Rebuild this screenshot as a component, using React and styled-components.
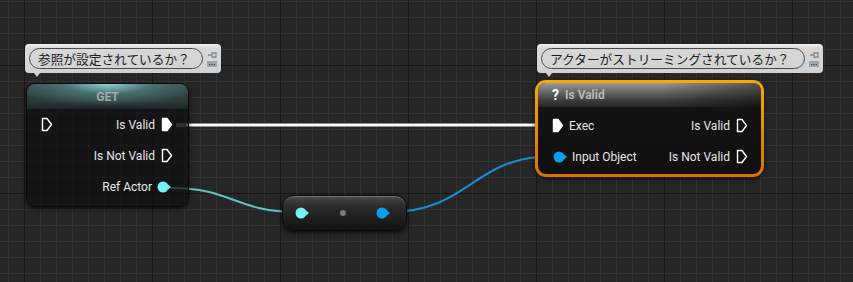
import React from 'react';
import styled, { createGlobalStyle } from 'styled-components';

const GlobalStyles = createGlobalStyle`
  html, body {
    margin: 0;
    padding: 0;
    background: #262626;
    font-family: Roboto, "Noto Sans", sans-serif;
  }
`;

// grid: minor every 16px, major every 128px
const Canvas = styled.div`
  position: relative;
  width: 853px;
  height: 282px;
  overflow: hidden;
  background-color: #262626;
  background-image:
    linear-gradient(to right, #171717 1px, transparent 1px),
    linear-gradient(to bottom, #171717 1px, transparent 1px),
    linear-gradient(to right, #333333 1px, transparent 1px),
    linear-gradient(to bottom, #333333 1px, transparent 1px);
  background-size: 128px 128px, 128px 128px, 16px 16px, 16px 16px;
  background-position: 24px 0, 0 65px, 8px 0, 0 1px;
`;

const Wires = styled.svg`
  position: absolute;
  left: 0;
  top: 0;
`;

const Placed = styled.div`
  position: absolute;
  left: ${p => p.x}px;
  top: ${p => p.y}px;
`;

const Bubble = styled.div`
  position: relative;
  display: flex;
  align-items: center;
  gap: 3px;
  height: 29px;
  padding: 0 3px 0 4px;
  box-sizing: border-box;
  width: ${p => p.w}px;
  border-radius: 4px;
  background: linear-gradient(to bottom, #f2f2f2 0%, #d8d8d8 15%, #d2d2d2 100%);
  &::after {
    content: '';
    position: absolute;
    left: 9px;
    bottom: -4px;
    border-left: 3px solid transparent;
    border-right: 3px solid transparent;
    border-top: 4px solid #d2d2d2;
  }
`;

const Pill = styled.div`
  flex: 1;
  height: 21px;
  box-sizing: border-box;
  border: 1px solid #4a4a4a;
  border-radius: 11px;
  display: flex;
  align-items: center;
  padding-left: 8px;
  font-family: "Noto Sans CJK JP", "Noto Sans", sans-serif;
  font-size: 12.7px;
  color: #1c1c1c;
  white-space: nowrap;
  letter-spacing: 0;
`;

const BubbleIcons = styled.div`
  display: flex;
  flex-direction: column;
  align-items: center;
  gap: 2px;
  width: 12px;
`;

const Node = styled.div`
  width: ${p => p.w}px;
  box-sizing: border-box;
  border-radius: 9px;
  border: 1px solid #0b0b0b;
  background: rgba(14, 14, 14, 0.72);
  box-shadow: 0 2px 4px rgba(0, 0, 0, 0.7);
  overflow: hidden;
  padding-bottom: 4px;
`;

const Selected = styled.div`
  padding: 3px;
  border-radius: 11px;
  background: linear-gradient(to bottom, #f7aa00, #dc7000);
  box-shadow: 0 2px 4px rgba(0, 0, 0, 0.6);
`;

const FuncNode = styled.div`
  width: 223px;
  border-radius: 8px;
  background: linear-gradient(to bottom, #141414, #101010);
  overflow: hidden;
  padding-bottom: 2px;
`;

const GetHeader = styled.div`
  height: 25px;
  display: flex;
  align-items: center;
  justify-content: center;
  font-weight: bold;
  font-size: 12px;
  color: #a9a9a9;
  background:
    radial-gradient(ellipse 60% 90% at 50% 0%, rgba(150, 215, 215, 0.95) 0%, rgba(80, 130, 130, 0.7) 45%, rgba(40, 60, 60, 0) 100%),
    linear-gradient(to bottom, #3a4a4a 0%, #2a3838 70%, #1c2424 100%);
`;

const FuncHeader = styled.div`
  height: 24px;
  display: flex;
  align-items: center;
  gap: 6px;
  padding-left: 14px;
  font-weight: bold;
  font-size: 12px;
  color: #b9b9b9;
  background:
    linear-gradient(to right, rgba(0, 0, 0, 0) 55%, rgba(0, 0, 0, 0.45) 100%),
    linear-gradient(to bottom, #9a9a9a 0%, #6a6a6a 35%, #3a3a3a 75%, #262626 100%);
`;

const Question = styled.span`
  color: #ffffff;
  font-size: 14px;
  font-weight: bold;
`;

const Body = styled.div`
  padding-top: ${p => p.pt || 0}px;
  display: flex;
  flex-direction: column;
`;

const Row = styled.div`
  height: 31px;
  display: flex;
  align-items: center;
  justify-content: space-between;
  padding: 0 ${p => p.pr || 15}px 0 ${p => p.pl || 14}px;
`;

const Side = styled.div`
  display: flex;
  align-items: center;
  gap: ${p => p.gap || 6}px;
  font-size: 12px;
  color: #e6e6e6;
  white-space: nowrap;
`;

const Reroute = styled.div`
  width: 125px;
  height: 36px;
  box-sizing: border-box;
  border-radius: 12px;
  border: 1px solid #0c0c0c;
  background: linear-gradient(to bottom, #4a4a4a 0%, #2c2c2c 30%, #1c1c1c 70%, #141414 100%);
  box-shadow: 0 2px 4px rgba(0, 0, 0, 0.7), inset 0 1px 0 rgba(255, 255, 255, 0.25);
  display: flex;
  align-items: center;
  justify-content: space-between;
  padding: 0 15px 0 12px;
`;

const Dot = styled.span`
  width: 6px;
  height: 6px;
  border-radius: 50%;
  background: #7a7a7a;
`;

const ExecPin = ({ filled }) => (
  <svg width="12" height="15" viewBox="0 0 12 15">
    <path d="M1.5 1.5 H6 L10.5 7.5 L6 13.5 H1.5 Z" fill={filled ? '#fff' : 'none'} stroke="#fff" strokeWidth="1.4" strokeLinejoin="round" />
  </svg>
);

const DataPin = ({ color }) => (
  <svg width="15" height="12" viewBox="0 0 15 12">
    <circle cx="6" cy="6" r="5.5" fill={color} />
    <path d="M11 3.5 L14 6 L11 8.5 Z" fill={color} />
  </svg>
);

const PinIcons = () => (
  <BubbleIcons>
    <svg width="11" height="8" viewBox="0 0 11 8">
      <path d="M1 4 H5 M5 1 V7 M5 2 H9 V6 H5 M9 1 V7" stroke="#8a8a8a" strokeWidth="1.3" fill="none" />
    </svg>
    <svg width="10" height="6" viewBox="0 0 10 6">
      <rect x="0" y="0" width="10" height="6" fill="#9aa6b2" />
      <rect x="2" y="3" width="1.2" height="1.2" fill="#3a4550" />
      <rect x="4.4" y="3" width="1.2" height="1.2" fill="#3a4550" />
      <rect x="6.8" y="3" width="1.2" height="1.2" fill="#3a4550" />
    </svg>
  </BubbleIcons>
);

const App = () => {
  return (
    <Canvas>
      <GlobalStyles />
      <Wires width="853" height="282">
        <line x1="176" y1="125" x2="552" y2="125" stroke="#8c8c8c" strokeWidth="4" />
        <line x1="186" y1="125" x2="536" y2="125" stroke="#ffffff" strokeWidth="2" />
        <path d="M171 188 C 232 188, 236 212, 297 212" stroke="#5fc4c4" strokeWidth="2" fill="none" />
        <path d="M389 212 C 470 212, 472 156, 554 156" stroke="#168ed0" strokeWidth="2" fill="none" />
      </Wires>

      <Placed x={25} y={44}>
        <Bubble w={196}>
          <Pill>参照が設定されているか？</Pill>
          <PinIcons />
        </Bubble>
      </Placed>

      <Placed x={26} y={83}>
        <Node w={163}>
          <GetHeader>GET</GetHeader>
          <Body>
            <Row>
              <Side><ExecPin /></Side>
              <Side>Is Valid<ExecPin filled /></Side>
            </Row>
            <Row>
              <Side />
              <Side>Is Not Valid<ExecPin /></Side>
            </Row>
            <Row pr={16}>
              <Side />
              <Side gap={5}>Ref Actor<DataPin color="#74f2f6" /></Side>
            </Row>
          </Body>
        </Node>
      </Placed>

      <Placed x={537} y={44}>
        <Bubble w={286}>
          <Pill>アクターがストリーミングされているか？</Pill>
          <PinIcons />
        </Bubble>
      </Placed>

      <Placed x={535} y={80}>
        <Selected>
          <FuncNode>
            <FuncHeader><Question>?</Question>Is Valid</FuncHeader>
            <Body pt={3}>
              <Row pl={14} pr={13}>
                <Side gap={5}><ExecPin filled />Exec</Side>
                <Side>Is Valid<ExecPin /></Side>
              </Row>
              <Row pl={15} pr={13}>
                <Side gap={4}><DataPin color="#0aa0f0" />Input Object</Side>
                <Side>Is Not Valid<ExecPin /></Side>
              </Row>
            </Body>
          </FuncNode>
        </Selected>
      </Placed>

      <Placed x={282} y={195}>
        <Reroute>
          <DataPin color="#74f2f6" />
          <Dot />
          <DataPin color="#0aa0f0" />
        </Reroute>
      </Placed>
    </Canvas>
  );
};

export default App;
